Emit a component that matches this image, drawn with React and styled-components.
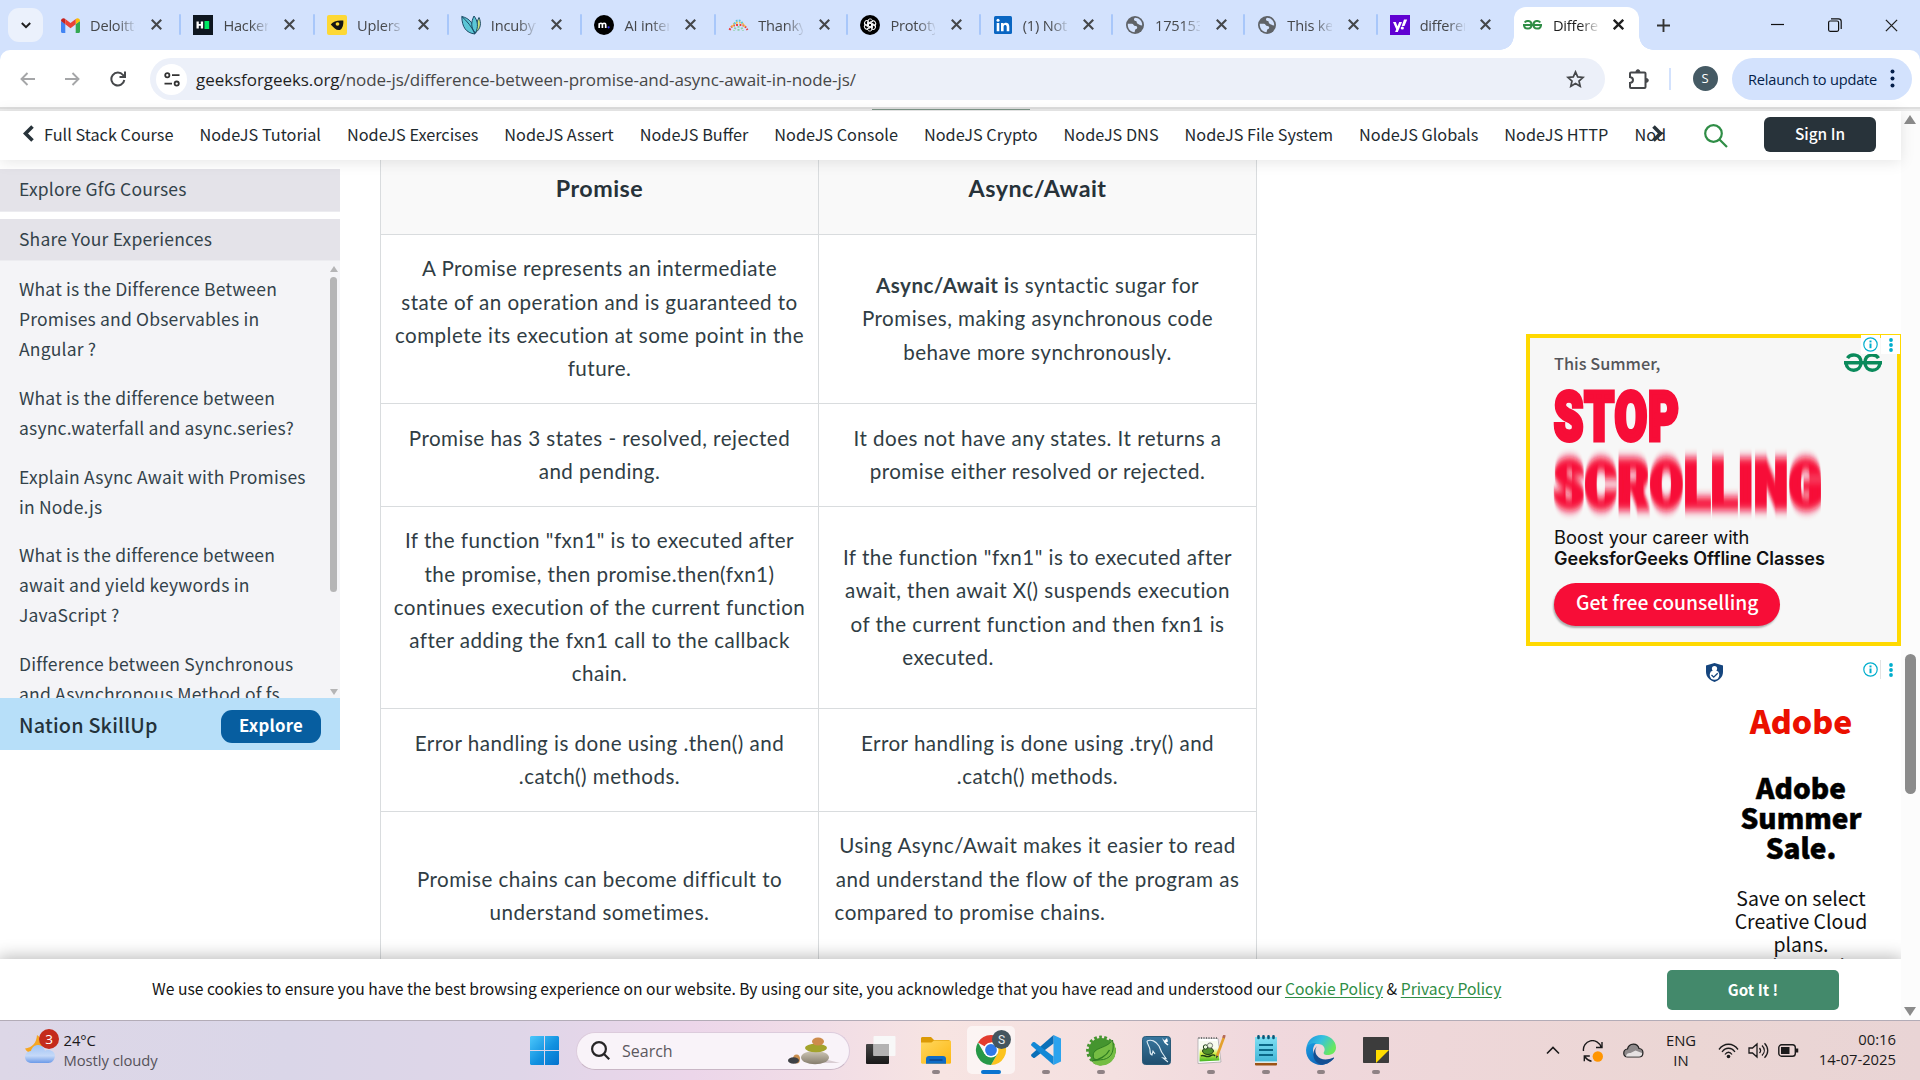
import React from "react";
import styled, { createGlobalStyle } from "styled-components";

const UI = '"Open Sans", "Noto Sans", sans-serif';
const SITE = '"Noto Sans CJK SC", "Noto Sans", sans-serif';
const ARTICLE = 'Lato, "Noto Sans", sans-serif';

const Global = createGlobalStyle`
  *, *::before, *::after { box-sizing: border-box; }
  body { margin: 0; background: #fff; overflow: hidden; }
  svg { display: block; flex: none; }
`;

const Screen = styled.div`
  width: 1920px;
  height: 1080px;
  display: flex;
  flex-direction: column;
  overflow: hidden;
  font-family: ${UI};
  color: #1f1f1f;
`;

/* ---------- browser tabs ---------- */

const TabStrip = styled.div`
  height: 50px;
  flex: none;
  display: flex;
  background: #d3e2fd;
`;

const TabSearch = styled.div`
  width: 35px;
  height: 34px;
  margin: 8px 4px 0 8px;
  border-radius: 11px;
  background: #ebf1fc;
  display: grid;
  place-items: center;
`;

const Tab = styled.div`
  width: ${(p) => p.$width || 133}px;
  height: 50px;
  flex: none;
  display: flex;
  align-items: center;
  padding-left: 13px;
  position: relative;
  color: #45474a;
  &::after {
    content: "";
    position: absolute;
    right: -1px;
    top: 14px;
    width: 2px;
    height: 21px;
    border-radius: 1px;
    background: ${(p) => (p.$line ? "#a8c7fa" : "transparent")};
  }
`;

const ActiveTab = styled(Tab)`
  color: #1f1f1f;
  &::before {
    content: "";
    position: absolute;
    z-index: 0;
    left: 4px;
    right: 4px;
    top: 7px;
    bottom: 0;
    border-radius: 12px 12px 0 0;
    background: #fff;
  }
  & > * { position: relative; z-index: 1; }
`;

const TabFoot = styled.i`
  && {
    position: absolute;
    bottom: 0;
    width: 14px;
    height: 14px;
    ${(p) => (p.$side === "left" ? "left: -10px;" : "right: -10px;")}
    background: radial-gradient(circle at ${(p) => (p.$side === "left" ? "0 0" : "100% 0")}, transparent 13.5px, #fff 14px);
  }
`;

const Favicon = styled.span`
  width: 20px;
  height: 20px;
  display: grid;
  place-items: center;
  flex: none;
`;

const TabTitle = styled.span`
  width: 45px;
  margin-left: 10px;
  padding-bottom: 1px;
  font-size: 14.6px;
  line-height: 22px;
  letter-spacing: -0.2px;
  overflow: hidden;
  white-space: nowrap;
  mask-image: linear-gradient(90deg, #000 60%, transparent 105%);
`;

const TabClose = styled.span`
  width: 12px;
  height: 12px;
  margin-left: 15.5px;
`;

const NewTab = styled.div`
  width: 42px;
  height: 50px;
  display: grid;
  place-items: center;
`;

const WindowControls = styled.div`
  margin-left: auto;
  display: flex;
  align-items: center;
  height: 50px;
`;

const WindowButton = styled.div`
  width: 57px;
  height: 50px;
  display: grid;
  place-items: center;
`;

/* ---------- toolbar ---------- */

const ToolbarBack = styled.div`
  background: #d3e2fd;
  flex: none;
`;

const Toolbar = styled.div`
  height: 57px;
  background: #fff;
  border-radius: 10px 10px 0 0;
  display: flex;
  align-items: center;
  padding: 0 8px 0 5px;
`;

const NavButton = styled.div`
  width: 45px;
  display: grid;
  place-items: center;
`;

const Omnibox = styled.div`
  width: 1455px;
  height: 42px;
  margin: 1px 0 0 10px;
  padding: 0 20px 0 6px;
  border-radius: 21px;
  background: #ecf0f9;
  display: flex;
  align-items: center;
`;

const SiteInfo = styled.div`
  width: 31px;
  height: 31px;
  border-radius: 50%;
  background: #fff;
  display: grid;
  place-items: center;
`;

const Url = styled.div`
  flex: 1;
  margin-left: 9px;
  padding-top: 1px;
  font-size: 17px;
  line-height: 24px;
  letter-spacing: -0.06px;
  color: #474747;
  white-space: nowrap;
  b { font-weight: 400; color: #1f1f1f; }
`;

const Extensions = styled.div`
  width: 66px;
  padding-left: 23px;
  border-right: 2px solid #d3e2fd;
`;

const Avatar = styled.div`
  width: 25px;
  height: 25px;
  margin-left: 21.5px;
  border-radius: 50%;
  background: #455a64;
  color: #fff;
  font-size: 13px;
  line-height: 25px;
  text-align: center;
`;

const Relaunch = styled.div`
  width: 180px;
  height: 42px;
  margin-left: auto;
  padding: 0 17px 0 16px;
  border-radius: 21px;
  background: #d3e2fd;
  color: #041e49;
  font-size: 14.6px;
  letter-spacing: -0.2px;
  white-space: nowrap;
  display: flex;
  align-items: center;
  justify-content: space-between;
`;

const ToolbarEdge = styled.div`
  height: 4px;
  flex: none;
  background: linear-gradient(#dedede 0 2px, #ebebeb 2px 4px);
  padding: 2px 0 0 872px;
  &::before {
    content: "";
    display: block;
    width: 158px;
    height: 1px;
    background: #7f978a;
  }
`;

/* ---------- page ---------- */

const Page = styled.div`
  height: 909px;
  flex: none;
  display: flex;
  background: #fff;
`;

const PageMain = styled.div`
  width: 1901px;
  display: flex;
  flex-direction: column;
  font-family: ${SITE};
`;

const PageScroll = styled.div`
  width: 19px;
  background: #fcfcfc;
  display: flex;
  flex-direction: column;
  align-items: center;
  padding: 4px 1px 4px 0;
`;

const ScrollArrow = styled.i`
  width: 0;
  height: 0;
  border: ${(p) => p.$size}px solid transparent;
  border-top-width: ${(p) => (p.$down ? p.$size * 1.5 : 0)}px;
  border-bottom-width: ${(p) => (p.$down ? 0 : p.$size * 1.5)}px;
  border-${(p) => (p.$down ? "top" : "bottom")}-color: ${(p) => p.$color};
`;

const PageThumb = styled.div`
  width: 11px;
  height: 140px;
  margin: 530px 0 auto;
  border-radius: 6px;
  background: #8b8b8b;
`;

const SiteNav = styled.nav`
  height: 49px;
  flex: none;
  display: flex;
  align-items: center;
  background: #fff;
  box-shadow: 0 2px 14px rgba(0, 0, 0, 0.1);
  z-index: 2;
  padding-left: 23px;
`;

const NavLinks = styled.div`
  width: 1633px;
  margin-left: 10px;
  padding-bottom: 4px;
  display: flex;
  gap: 26px;
  overflow: hidden;
  white-space: nowrap;
  font-size: 16.27px;
  line-height: 30px;
  color: #1e2a2f;
`;

const NavClip = styled.span`
  width: 32px;
  overflow: hidden;
`;

const NavArrow = styled.div`
  width: 11px;
  margin-left: ${(p) => (p.$over ? "-25px" : "0")};
  padding-bottom: 4px;
  z-index: 1;
`;

const SearchIcon = styled.div`
  margin-left: 41px;
`;

const SignIn = styled.div`
  width: 112px;
  height: 35px;
  margin: 0 0 2px 36px;
  border-radius: 6px;
  background: #28333a;
  color: #fff;
  font-size: 15.4px;
  font-weight: 500;
  line-height: 33px;
  text-align: center;
`;

const Content = styled.div`
  height: 799px;
  flex: none;
  display: flex;
  align-items: flex-start;
  overflow: hidden;
`;

/* ---------- sidebar ---------- */

const Sidebar = styled.aside`
  width: 340px;
  margin-top: 9px;
  color: #33424a;
  font-size: 17.5px;
  letter-spacing: 0.19px;
`;

const SideHeading = styled.div`
  height: ${(p) => p.$height}px;
  margin-bottom: ${(p) => p.$gap}px;
  padding-left: 19px;
  line-height: 40px;
  background: #e4e3e9;
  border-bottom: 1px solid #ececf0;
`;

const SideList = styled.div`
  height: 437px;
  display: flex;
  justify-content: space-between;
  background: #f4f4f7;
  overflow: hidden;
`;

const SideLinks = styled.div`
  padding: 13px 0 0 19px;
  white-space: nowrap;
`;

const SideLink = styled.div`
  line-height: 30px;
  margin-bottom: 18.8px;
`;

const SideScroll = styled.div`
  width: 13px;
  display: flex;
  flex-direction: column;
  align-items: center;
  padding: 5px 0 3px;
`;

const SideThumb = styled.div`
  width: 7px;
  height: 315px;
  margin: 5px 0 auto;
  border-radius: 4px;
  background: #b5b5b6;
`;

const SkillUp = styled.div`
  height: 52px;
  padding: 0 19px;
  display: flex;
  align-items: center;
  justify-content: space-between;
  background: #b7dff9;
  color: #24323a;
  font-size: 19.8px;
  font-weight: 500;
`;

const ExploreButton = styled.div`
  width: 100px;
  height: 33px;
  margin-top: 5px;
  border-radius: 11px;
  background: #075ea0;
  color: #fff;
  font-size: 16.8px;
  font-weight: 700;
  line-height: 31px;
  text-align: center;
`;

/* ---------- comparison table ---------- */

const Compare = styled.div`
  width: 877px;
  margin-left: 40px;
  display: grid;
  grid-template-columns: 438px 438px;
  grid-template-rows: 75px 169px 103px 202px 103px 169px;
  border-right: 1px solid #d9dcde;
  font-family: ${ARTICLE};
  font-size: 20.6px;
  letter-spacing: 0.47px;
  color: #303d44;
`;

const HeadCell = styled.div`
  padding-top: 12px;
  border-left: 1px solid #d9dcde;
  border-bottom: 1px solid #d9dcde;
  background: #f9f9f9;
  color: #273239;
  font-size: 23.3px;
  font-weight: 700;
  line-height: 33px;
  text-align: center;
`;

const Cell = styled.div`
  border-left: 1px solid #d9dcde;
  border-bottom: 1px solid #d9dcde;
  display: flex;
  flex-direction: column;
  align-items: center;
  justify-content: center;
  white-space: nowrap;
`;

const Line = styled.div`
  height: 33.3px;
  line-height: 32.6px;
  padding-right: ${(p) => p.$tail || 0}px;
  b { font-weight: 700; }
`;

/* ---------- ads ---------- */

const AdColumn = styled.div`
  width: 375px;
  margin: 174px 0 0 auto;
  display: flex;
  flex-direction: column;
  align-items: flex-end;
`;

const SummerAd = styled.div`
  width: 375px;
  height: 312px;
  border: 4px solid #ffd900;
  background: #f7f7f7;
  padding: 13px 0 0 24px;
  position: relative;
  white-space: nowrap;
`;

const AdKicker = styled.div`
  height: 24px;
  margin-bottom: 8px;
  color: #55565a;
  font-size: 16.3px;
  font-weight: 500;
  line-height: 24px;
`;

const Shout = styled.div`
  height: 68px;
  font-family: Roboto, sans-serif;
  font-weight: 900;
  font-size: 67.5px;
  line-height: 68px;
  letter-spacing: 2px;
  color: #f70d37;
  -webkit-text-stroke: 5px #f70d37;
  transform: scaleX(${(p) => p.$squeeze});
  transform-origin: 0 50%;
  filter: ${(p) => (p.$moving ? "url(#motion)" : "none")};
`;

const Pitch = styled.div`
  font-family: Inter, sans-serif;
  font-size: ${(p) => (p.$strong ? 18.05 : 18.3)}px;
  font-weight: ${(p) => (p.$strong ? 600 : 400)};
  line-height: 21px;
  color: #111;
`;

const PitchBlock = styled.div`
  margin: 8px 0 14px;
`;

const Counsel = styled.div`
  width: 226px;
  height: 43px;
  padding-left: 22px;
  border-radius: 22px;
  background: #f70d37;
  box-shadow: -1px 2px 2px rgba(0, 0, 0, 0.3);
  color: #fff;
  font-size: 19.3px;
  font-weight: 500;
  line-height: 38px;
`;

const AdLogo = styled.div`
  position: absolute;
  right: 15px;
  top: 15px;
`;

const AdChoices = styled.div`
  position: absolute;
  right: ${(p) => p.$inset}px;
  top: ${(p) => p.$top}px;
  display: flex;
  gap: 1px;
  background: ${(p) => (p.$ruled ? "#e3e3e3" : "transparent")};
  span {
    width: 19px;
    height: 19px;
    background: #fff;
    display: grid;
    place-items: center;
  }
`;

const AdobeAd = styled.div`
  width: 200px;
  height: 330px;
  position: relative;
  padding-top: 54.5px;
  display: flex;
  flex-direction: column;
  align-items: center;
  white-space: nowrap;
`;

const Shield = styled.div`
  position: absolute;
  left: 5px;
  top: 17px;
`;

const AdobeLogo = styled.div`
  height: 38px;
  font-size: 32px;
  font-weight: 900;
  line-height: 38px;
  color: #eb1000;
`;

const AdobeHead = styled.div`
  margin-top: 33px;
  font-size: 28px;
  font-weight: 900;
  line-height: 30.3px;
  text-align: center;
  color: #000;
  -webkit-text-stroke: 0.5px #000;
`;

const AdobeCopy = styled.div`
  margin-top: 25px;
  font-size: 19.5px;
  line-height: 22.6px;
  text-align: center;
  color: #111;
`;

/* ---------- cookie bar ---------- */

const CookieBar = styled.div`
  height: 61px;
  flex: none;
  padding: 0 62px 0 152px;
  display: flex;
  align-items: center;
  justify-content: space-between;
  background: #fff;
  box-shadow: 0 0 16px 2px rgba(0, 0, 0, 0.28);
  z-index: 2;
  font-size: 15.67px;
  line-height: 24px;
  white-space: nowrap;
  color: #151515;
  clip-path: inset(-24px 0 0 0);
  a { color: #2f8d46; text-decoration: underline; text-underline-offset: 2px; }
`;

const CookieText = styled.div`
  padding-bottom: 1.5px;
`;

const GotIt = styled.div`
  width: 172px;
  height: 40px;
  border-radius: 5px;
  background: #43896b;
  color: #fff;
  font-size: 15.2px;
  font-weight: 700;
  line-height: 38px;
  text-align: center;
`;

/* ---------- taskbar ---------- */

const Taskbar = styled.div`
  height: 60px;
  flex: none;
  border-top: 1px solid #b3acb7;
  background: linear-gradient(90deg, #ddd7e7 0%, #dad6e8 15%, #dfd6e8 27%, #ecd6ea 36%, #f1dde6 43%, #f7e4e2 49%, #f4e0e0 58%, #f0d8dd 66%, #eed7d9 75%, #ebd6d4 88%, #e9d4d5 100%);
  display: flex;
  align-items: center;
  color: #1b1a1b;
`;

const Weather = styled.div`
  width: 506px;
  height: 59px;
  padding: 8px 0 0 24px;
  display: flex;
  align-items: flex-start;
`;

const WeatherText = styled.div`
  margin: 1px 0 0 4.5px;
  font-size: 14.8px;
  line-height: 20px;
  letter-spacing: -0.05px;
  div + div { color: #55525a; }
`;

const StartMenu = styled.div`
  width: 70px;
  padding-left: 24px;
`;

const TaskSearch = styled.div`
  width: 274px;
  height: 38px;
  padding: 0 9px 0 14px;
  border-radius: 19px;
  background: #f9f3f9;
  border: 1px solid #dccbdc;
  border-bottom-color: #c9b6c6;
  display: flex;
  align-items: center;
  color: #5c585e;
  font-size: 16px;
  span { flex: 1; margin-left: 12px; }
`;

const Apps = styled.div`
  display: flex;
  margin-left: 3.5px;
  height: 59px;
`;

const AppSlot = styled.div`
  width: 55px;
  height: 59px;
  display: flex;
  flex-direction: column;
  align-items: center;
  padding-top: 5px;
`;

const AppTile = styled.div`
  width: 48px;
  height: 48px;
  border-radius: 5px;
  background: ${(p) => (p.$active ? "rgba(255,255,255,.6)" : "transparent")};
  display: grid;
  place-items: center;
`;

const AppMark = styled.div`
  width: ${(p) => (p.$mark === "active" ? 20 : 8)}px;
  height: 4px;
  margin-top: -4px;
  border-radius: 2px;
  background: ${(p) => ({ active: "#0a74d0", open: "#8f8285", none: "transparent" }[p.$mark])};
`;

const Tray = styled.div`
  margin-left: auto;
  display: flex;
  align-items: center;
  padding-right: 24px;
  font-size: 14.8px;
  line-height: 20px;
`;

const TrayItem = styled.div`
  width: ${(p) => p.$width}px;
  padding-bottom: ${(p) => p.$lift || 0}px;
  display: grid;
  place-items: center;
  text-align: center;
`;

const Clock = styled.div`
  width: 89px;
  padding-bottom: 3px;
  display: flex;
  flex-direction: column;
  align-items: flex-end;
  white-space: nowrap;
`;

/* ---------- drawings ---------- */

const Cross = ({ size = 10, width = 1.9 }) => (
  <svg width={size} height={size} viewBox="0 0 10 10" fill="none" stroke="currentColor" strokeWidth={width}>
    <path d="M.7.7l8.600 8.600M9.300.7L.7 9.300" />
  </svg>
);

const GfgMark = ({ width, color, stroke = 3 }) => (
  <svg width={width} height={width / 2} viewBox="0 0 38 19" fill="none" stroke={color} strokeWidth={stroke}>
    <path d="M3.500 5.200C6.200.6 17 .1 17 9.500M17 9.500c0 10-14 10.400-15 .6M0 9.800h38M34.500 5.200C31.800.6 21 .1 21 9.500M21 9.500c0 10 14 10.400 15 .6" />
  </svg>
);

const Globe = () => (
  <svg width="18" height="18" viewBox="0 0 20 20">
    <circle cx="10" cy="10" r="10" fill="#5f6368" />
    <path d="M2 8.500h4.500c2 0 2 2.500 4 2.500 2.500 0 2.500 3 .5 3.500-1 .3-1 2-1.500 3.500C5 18 1.500 13.500 2 8.500zM10 2c-2 1.500-1 3.500.5 3.500 2 0 1 2.500 2.500 3s2 2 5 2C18.300 5.500 14.500 2 10 2z" fill="#d3e2fd" />
  </svg>
);

const favicons = {
  gmail: (
    <svg width="19" height="15" viewBox="0 0 19 15">
      <path d="M0 3v10.500C0 14.400.6 15 1.400 15H4.300V6z" fill="#4285f4" />
      <path d="M19 3v10.500c0 .9-.6 1.500-1.400 1.500h-2.900V6z" fill="#34a853" />
      <path d="M0 3C0 .3 2.600-.6 4.300.9V6.200L0 3z" fill="#c5221f" />
      <path d="M19 3c0-2.700-2.600-3.600-4.300-2.100v5.300L19 3z" fill="#fbbc04" />
      <path d="M4.300.9l5.200 4 5.200-4v5.300l-5.200 4-5.200-4z" fill="#ea4335" />
    </svg>
  ),
  hacker: (
    <svg width="20" height="20" viewBox="0 0 20 20">
      <path d="M0 0h20v20H0z" fill="#0e1620" />
      <path d="M3.500 6.500h2.300v2.600h2V6.500h2.300v7H7.800v-2.700h-2v2.700H3.500z" fill="#fff" />
      <path d="M11.500 6h4.700v8h-4.700z" fill="#00ea64" />
    </svg>
  ),
  uplers: (
    <svg width="20" height="20" viewBox="0 0 20 20">
      <rect width="20" height="20" rx="2" fill="#fdd835" />
      <path d="M3.800 9.500C6 6 11 5 16.300 5.500c.4 4-.8 8.500-3.500 9.500-3.500.7-5.500-2-9-5.500z" fill="#151515" />
      <ellipse cx="10.500" cy="9" rx="1.900" ry="1.700" fill="#fdd835" />
    </svg>
  ),
  incuby: (
    <svg width="20" height="20" viewBox="0 0 20 20" stroke="#1b4b66" strokeWidth="1">
      <path d="M14 18c1-6 1.500-11 4-15.500C20.500 8 20 14 14 18z" fill="#c8df7c" />
      <path d="M14 19C5 18 1 12 .8 1.500 8 3 14 9 14 19z" fill="#5bc6d6" />
      <path d="M14.500 18C9.500 13 10 7 13 1c4 5 4.500 11 1.500 17z" fill="#5bc6d6" />
      <path d="M14 19C11 12 6 6 .8 1.500" fill="none" />
    </svg>
  ),
  m: (
    <svg width="20" height="20" viewBox="0 0 20 20">
      <circle cx="10" cy="10" r="10" fill="#000" />
      <path d="M5.200 13V8.200M5.200 9.500c.4-1.700 3.200-1.700 3.200.2V13M8.400 9.500c.4-1.700 3.300-1.700 3.300.2V13" stroke="#fff" strokeWidth="1.700" fill="none" />
      <circle cx="14.600" cy="12.300" r="1.100" fill="#3b35ff" />
    </svg>
  ),
  thank: (
    <svg width="21" height="12" viewBox="0 0 21 12" fill="none" strokeWidth="2" strokeDasharray="1.700 1.300">
      <path d="M1.500 11C4 6 6 6 10.500 6s6.500 0 9 5" stroke="#ec3b3b" />
      <path d="M4 8C6 3.500 8 3.500 10.500 3.500S15 3.500 17 8" stroke="#f5c242" />
      <path d="M6.500 5c1-3 2.500-3.500 4-3.500s3 .5 4 3.500" stroke="#55c4dd" />
      <path d="M10.500 7v5M7.500 8.500L6 12M13.500 8.500L15 12" stroke="#8ed0a8" />
    </svg>
  ),
  gpt: (
    <svg width="20" height="20" viewBox="0 0 20 20" fill="none" stroke="#fff" strokeWidth="1">
      <circle cx="10" cy="10" r="10" fill="#000" stroke="none" />
      {[0, 60, 120, 180, 240, 300].map((a) => (
        <path key={a} transform={`rotate(${a} 10 10)`} d="M10 11.800L7.600 10.400V6.500c0-3 4.200-3.400 5-.8M10 8.100l3.300-1.900" />
      ))}
    </svg>
  ),
  linkedin: (
    <svg width="18" height="18" viewBox="0 0 18 18">
      <rect width="18" height="18" rx="1.500" fill="#0a66c2" />
      <path d="M2.700 6.900h2.600v8.400H2.700zM7 6.900h2.500v1.200c1.200-2.100 5.800-2 5.800 2.300v4.900h-2.600v-4.400c0-2.500-3.100-2.300-3.100 0v4.400H7z" fill="#fff" />
      <circle cx="4" cy="4.200" r="1.500" fill="#fff" />
    </svg>
  ),
  globe: <Globe />,
  yahoo: (
    <svg width="20" height="20" viewBox="0 0 20 20">
      <path d="M0 0h20v20H0z" fill="#6001d2" />
      <path d="M3 7h2.800l1.700 4.200L9.200 7H12l-4.200 10H5.100l1.100-2.700zM14 4.500h3.200L14.500 11h-2.800z" fill="#fff" />
      <circle cx="12.300" cy="13" r="1.600" fill="#fff" />
    </svg>
  ),
  gfg: <GfgMark width={19} color="#2f8d46" stroke={4} />,
};

const tabs = [
  ["gmail", "Deloitte", 133.4],
  ["hacker", "HackerR", 133.7],
  ["uplers", "Uplers |", 133.7],
  ["incuby", "Incubyte", 133.7],
  ["m", "AI interv", 133.7],
  ["thank", "Thanky", 132.3],
  ["gpt", "Prototy", 132.3],
  ["linkedin", "(1) Noti", 132.3],
  ["globe", "175153", 132.3],
  ["globe", "This key", 132.3],
  ["yahoo", "differen", 133.3],
];

const InfoIcon = () => (
  <svg width="15" height="15" viewBox="0 0 15 15" fill="none" stroke="#00aecd">
    <circle cx="7.500" cy="7.500" r="6.700" strokeWidth="1.200" />
    <path d="M7.500 6.500v4.700" strokeWidth="2" />
    <path d="M7.500 3.500v1.900" strokeWidth="2" />
  </svg>
);

const Dots = ({ color, r = 1.9, gap = 5 }) => (
  <svg width="4" height="16" viewBox="0 0 4 16" fill={color}>
    <circle cx="2" cy={8 - gap} r={r} />
    <circle cx="2" cy="8" r={r} />
    <circle cx="2" cy={8 + gap} r={r} />
  </svg>
);

const AppIcons = {
  taskview: (
    <svg width="30" height="28" viewBox="0 0 30 28">
      <defs>
        <linearGradient id="tv" x1="0" y1="0" x2="0" y2="1">
          <stop offset="0" stopColor="#454545" />
          <stop offset="1" stopColor="#191919" />
        </linearGradient>
      </defs>
      <rect x="0" y="8" width="23" height="20" rx="1" fill="url(#tv)" />
      <rect x="7.500" y="0" width="22" height="20" rx="1" fill="#f8f8f8" />
      <path d="M7.500 8H23v12H7.500z" fill="#b3b2b2" />
    </svg>
  ),
  folder: (
    <svg width="30" height="27" viewBox="0 0 30 27">
      <defs>
        <linearGradient id="fo" x1="0" y1="0" x2="1" y2="1">
          <stop offset="0" stopColor="#ffd75e" />
          <stop offset="1" stopColor="#fdb813" />
        </linearGradient>
      </defs>
      <path d="M0 1.500C0 .6.600 0 1.500 0H10l3 3h15.500v5H0z" fill="#dc9a06" />
      <path d="M0 5.500h10.500l2.500-2h15.500c1 0 1.500.5 1.500 1.500v20.500c0 .8-.5 1.200-1.200 1.200H1.200c-.8 0-1.200-.4-1.200-1.200z" fill="url(#fo)" />
      <path d="M5 26.700V22c0-2 1-3 3-3h14c2 0 3 1 3 3v4.700z" fill="#0f6cc6" />
      <path d="M8.500 23h13" stroke="#0b3f82" strokeWidth="1.300" />
    </svg>
  ),
  chrome: (
    <svg width="40" height="40" viewBox="-2 -2 40 40">
      <path d="M18 18L5 10.500A15 15 0 0 1 31 10.500H18z" fill="#e33b2e" />
      <path d="M31 10.500H18v7.500l6.500 3.700L18 33a15 15 0 0 0 13-22.500z" fill="#fcc31e" />
      <path d="M5 10.500A15 15 0 0 0 18 33l6.500-11.300H18L11.500 21.700z" fill="#279847" />
      <circle cx="18" cy="18" r="7.500" fill="#fff" />
      <circle cx="18" cy="18" r="5.900" fill="#2f79e8" />
      <circle cx="28.500" cy="7.500" r="9.500" fill="#44555e" />
      <text x="28.500" y="12" fontSize="12" fill="#e7ecee" textAnchor="middle" fontFamily="Roboto">S</text>
    </svg>
  ),
  vscode: (
    <svg width="30" height="30" viewBox="0 0 30 30">
      <path d="M22.500 0L30 3.500v23L22.500 30z" fill="#2ba3ee" />
      <path d="M22.500 0v8.500L3.800 22.800c-.6.400-1.200.3-1.700-.1L.500 21.200c-.6-.6-.6-1.400 0-2z" fill="#0a6fb8" />
      <path d="M22.500 30v-8.500L3.800 7.200c-.6-.4-1.200-.3-1.700.1L.500 8.800c-.6.6-.6 1.400 0 2z" fill="#1288d6" />
    </svg>
  ),
  spring: (
    <svg width="31" height="31" viewBox="0 0 31 31">
      <circle cx="15" cy="15.500" r="12.500" fill="#45952f" />
      <circle cx="15" cy="15.500" r="13.200" fill="none" stroke="#45952f" strokeWidth="3.400" strokeDasharray="2.700 2.300" />
      <path d="M28 8.500C32.500 18 28 29.500 16 30.500c-5 .3-9-2-10.500-4.500C14 28 25 21 28 8.500z" fill="#75bd43" />
      <path d="M26.500 5c2 10 0 17.500-9 19.500-4 .8-7.500 0-9.500-.5C3.500 11.500 20 15 26.500 5z" fill="#75bd43" stroke="#2f7d22" strokeWidth="1" />
      <path d="M6 26c7-1 14.500-5 17.500-11" stroke="#2f7d22" strokeWidth="1.300" fill="none" />
    </svg>
  ),
  mysql: (
    <svg width="29" height="29" viewBox="0 0 29 29">
      <defs>
        <linearGradient id="my" x1="0" y1="0" x2="0" y2="1">
          <stop offset="0" stopColor="#38779f" />
          <stop offset="1" stopColor="#204e6e" />
        </linearGradient>
      </defs>
      <rect x=".5" y=".5" width="28" height="28" rx="3" fill="url(#my)" stroke="#295a78" />
      <path d="M5 5c4-2 9 0 12 5 1.500 5 3 7.500 7 12.500l-3-.5 5 4M5 5c0 3 3 6 3 9s0 4 2 5l1-4 2 3" fill="none" stroke="#dcebf3" strokeWidth="1.100" />
      <path d="M20 2l2.500 2.500L25 2l1 3.500-2 1L26.500 8.500 25.500 9.500l-3-2.500z" fill="#fff" />
    </svg>
  ),
  npp: (
    <svg width="30" height="30" viewBox="0 0 30 30">
      <defs>
        <linearGradient id="np" x1="0" y1="0" x2="0" y2="1">
          <stop offset=".35" stopColor="#f8fbf0" />
          <stop offset=".6" stopColor="#d5f04a" />
          <stop offset="1" stopColor="#42b524" />
        </linearGradient>
      </defs>
      <path d="M2 3l20 .5L25 27 2 28.500z" fill="#fff" stroke="#a9a9a9" strokeWidth=".8" />
      <path d="M3.500 6h18l2 19.500-20 1z" fill="url(#np)" />
      <path d="M2.500 3h20" stroke="#555" strokeDasharray="1 1.500" strokeWidth="1.500" />
      <ellipse cx="12" cy="16" rx="5.500" ry="3.500" fill="#4f8f2a" stroke="#1e3c14" />
      <circle cx="9.500" cy="12" r="2.200" fill="#e8f7d8" stroke="#1e3c14" />
      <circle cx="14" cy="10.500" r="2.600" fill="#e8f7d8" stroke="#777" />
      <path d="M5 21c3-2 5 2 9 0s4-1 5 0" stroke="#1e3c14" strokeWidth="1.500" fill="none" />
      <path d="M21 21L28 2" stroke="#e3a12d" strokeWidth="2.600" />
      <path d="M27.500 3L28.500 0" stroke="#b56b5a" strokeWidth="2.600" />
      <path d="M20 23.500l.3-3 2 .8z" fill="#333" />
    </svg>
  ),
  notepad: (
    <svg width="22" height="31" viewBox="0 0 22 31">
      <defs>
        <linearGradient id="no" x1="0" y1="0" x2="0" y2="1">
          <stop offset="0" stopColor="#7fdff3" />
          <stop offset="1" stopColor="#41b5d6" />
        </linearGradient>
      </defs>
      <rect y="25" width="22" height="5.500" rx="1" fill="#9b5215" />
      <path d="M0 2h22v25.500H0z" fill="url(#no)" />
      <path d="M0 26.500h22v1.300H0z" fill="#fff" />
      <path d="M4 10h14M4 15h14M4 20h14" stroke="#0a6787" strokeWidth="2" />
      <path d="M3.500 1.300v1.700M8.500 1.300v1.700M13.500 1.300v1.700M18.500 1.300v1.700" stroke="#0a5878" strokeWidth="2.600" strokeLinecap="round" />
    </svg>
  ),
  edge: (
    <svg width="30" height="30" viewBox="0 0 30 30">
      <defs>
        <linearGradient id="e1" x1="0" y1="0" x2="1" y2=".5">
          <stop offset="0" stopColor="#1e8fdc" />
          <stop offset=".5" stopColor="#35c1e0" />
          <stop offset="1" stopColor="#6ae85d" />
        </linearGradient>
        <linearGradient id="e2" x1="0" y1="0" x2="1" y2="1">
          <stop offset="0" stopColor="#1b9de2" />
          <stop offset="1" stopColor="#0d4fa8" />
        </linearGradient>
      </defs>
      <path d="M.3 13C1.500 5 7.500 0 15 0c9 0 15 6 15 12.500 0 5-4 7.500-8.500 7.500-3.500 0-4.500-1.500-3.500-3 2-3.500-.5-8-6-8C6 9 2 11 .3 13z" fill="url(#e1)" />
      <path d="M.1 14.500C.5 10 5 7.800 10 8.500c-3.500 3-4 8-1 12.500 3.500 5 11 6 18.500 2C24 28 19 30 15 30 6.500 30-.5 23.500.1 14.500z" fill="url(#e2)" />
      <path d="M12 10.500c-3 2-3.500 6.500-1 10 3 4.500 10 5 16 2.200.9-.5 1.300.2.900.8-3.900 4.700-9.400 6.200-13.400 6-7-2.500-8.500-10-6-15 1-2 2-3 3.500-4z" fill="#144f93" />
    </svg>
  ),
  sticky: (
    <svg width="26" height="26" viewBox="0 0 26 26">
      <path d="M1 0h24c.6 0 1 .4 1 1v24c0 .6-.4 1-1 1H1c-.6 0-1-.4-1-1V1c0-.6.4-1 1-1z" fill="#3c3c3c" />
      <path d="M13 13h13L13 26z" fill="#ffdc00" />
    </svg>
  ),
};

const apps = [
  ["taskview", "none"],
  ["folder", "open"],
  ["chrome", "active"],
  ["vscode", "open"],
  ["spring", "open"],
  ["mysql", "none"],
  ["npp", "open"],
  ["notepad", "open"],
  ["edge", "open"],
  ["sticky", "open"],
];

const navLinks = [
  "Full Stack Course",
  "NodeJS Tutorial",
  "NodeJS Exercises",
  "NodeJS Assert",
  "NodeJS Buffer",
  "NodeJS Console",
  "NodeJS Crypto",
  "NodeJS DNS",
  "NodeJS File System",
  "NodeJS Globals",
  "NodeJS HTTP",
];

const sideLinks = [
  ["What is the Difference Between", "Promises and Observables in", "Angular ?"],
  ["What is the difference between", "async.waterfall and async.series?"],
  ["Explain Async Await with Promises", "in Node.js"],
  ["What is the difference between", "await and yield keywords in", "JavaScript ?"],
  ["Difference between Synchronous", "and Asynchronous Method of fs"],
];

const rows = [
  [
    ["A Promise represents an intermediate", "state of an operation and is guaranteed to", "complete its execution at some point in the", "future."],
    [<><b>Async/Await i</b>s syntactic sugar for</>, "Promises, making asynchronous code", "behave more synchronously."],
  ],
  [
    ["Promise has 3 states - resolved, rejected", "and pending."],
    ["It does not have any states. It returns a", "promise either resolved or rejected."],
  ],
  [
    ["If the function \"fxn1\" is to executed after", "the promise, then promise.then(fxn1)", "continues execution of the current function", "after adding the fxn1 call to the callback", "chain."],
    ["If the function \"fxn1\" is to executed after", "await, then await X() suspends execution", "of the current function and then fxn1 is", { text: "executed.", tail: 179 }],
  ],
  [
    ["Error handling is done using .then() and", ".catch() methods."],
    ["Error handling is done using .try() and", ".catch() methods."],
  ],
  [
    ["Promise chains can become difficult to", "understand sometimes."],
    ["Using Async/Await makes it easier to read", "and understand the flow of the program as", { text: "compared to promise chains.", tail: 135 }, ""],
  ],
];

const Lines = ({ items }) => (
  <Cell>
    {items.map((l, i) => (l && l.text ? <Line key={i} $tail={l.tail}>{l.text}</Line> : <Line key={i}>{l}</Line>))}
  </Cell>
);

export default function App() {
  return (
    <Screen>
      <Global />
      <TabStrip>
        <TabSearch>
          <svg width="10" height="7" viewBox="0 0 10 7" fill="none" stroke="#1f1f1f" strokeWidth="2">
            <path d="M.8 1L5 5.200 9.200 1" />
          </svg>
        </TabSearch>
        {tabs.map(([icon, title, width], i) => (
          <Tab key={i} $width={width} $line={i < tabs.length - 1}>
            <Favicon>{favicons[icon]}</Favicon>
            <TabTitle>{title}</TabTitle>
            <TabClose><Cross size={11} /></TabClose>
          </Tab>
        ))}
        <ActiveTab>
          <TabFoot $side="left" />
          <TabFoot $side="right" />
          <Favicon>{favicons.gfg}</Favicon>
          <TabTitle>Differen</TabTitle>
          <TabClose><Cross size={11} width={2.1} /></TabClose>
        </ActiveTab>
        <NewTab>
          <svg width="13" height="13" viewBox="0 0 13 13" stroke="#333" strokeWidth="1.900"><path d="M6.500 0v13M0 6.500h13" /></svg>
        </NewTab>
        <WindowControls>
          <WindowButton>
            <svg width="13" height="13" viewBox="0 0 13 13" stroke="#111" strokeWidth="1.200"><path d="M0 5.500h13" /></svg>
          </WindowButton>
          <WindowButton>
            <svg width="14" height="14" viewBox="0 0 14 14" fill="none" stroke="#111" strokeWidth="1.200">
              <rect x=".6" y="3" width="10" height="10.300" rx="1.500" />
              <path d="M3 .8h7.500c1.600 0 2.700 1 2.700 2.700V11" />
            </svg>
          </WindowButton>
          <WindowButton><Cross size={13} width={1} /></WindowButton>
        </WindowControls>
      </TabStrip>

      <ToolbarBack>
        <Toolbar>
          <NavButton>
            <svg width="15" height="14" viewBox="0 0 15 14" fill="none" stroke="#a5a6a8" strokeWidth="1.900"><path d="M15 7H1.500M7.500 1l-6 6 6 6" /></svg>
          </NavButton>
          <NavButton>
            <svg width="15" height="14" viewBox="0 0 15 14" fill="none" stroke="#a5a6a8" strokeWidth="1.900"><path d="M0 7h13.500M7.500 1l6 6-6 6" /></svg>
          </NavButton>
          <NavButton>
            <svg width="16" height="16" viewBox="0 0 16 16" fill="none" stroke="#45474a" strokeWidth="2">
              <path d="M14.300 9A6.500 6.500 0 1 1 13 4l1.500 1.600" />
              <path d="M15 .5V6H9.500" />
            </svg>
          </NavButton>
          <Omnibox>
            <SiteInfo>
              <svg width="16" height="15" viewBox="0 0 16 15" fill="none" stroke="#333" strokeWidth="1.800">
                <circle cx="3.300" cy="3.200" r="2.100" /><path d="M8 3.200h7.500M.5 11.600H8" /><circle cx="12.700" cy="11.600" r="2.100" />
              </svg>
            </SiteInfo>
            <Url><b>geeksforgeeks.org</b>/node-js/difference-between-promise-and-async-await-in-node-js/</Url>
            <svg width="19" height="18" viewBox="0 0 19 18" fill="none" stroke="#45474a" strokeWidth="1.700">
              <path d="M9.500 1.900l2.200 5 5.400.5-4.100 3.600 1.200 5.300-4.700-2.800-4.700 2.800L6 11 1.900 7.400l5.400-.5z" />
            </svg>
          </Omnibox>
          <Extensions>
            <svg width="22" height="22" viewBox="0 0 22 22" fill="none" stroke="#45474a" strokeWidth="2">
              <path d="M3 4.500h13.500c.6 0 1 .4 1 1V19c0 .6-.4 1-1 1H3c-.6 0-1-.4-1-1v-4c4-.5 4-5.500 0-6V5.500c0-.6.4-1 1-1z" />
              <path d="M8 4.500V3.600a1.900 1.900 0 0 1 3.800 0v.9M17.500 10.500h.9a1.900 1.900 0 0 1 0 3.800h-.9" fill="#45474a" strokeWidth="1" />
            </svg>
          </Extensions>
          <Avatar>S</Avatar>
          <Relaunch>
            Relaunch to update
            <svg width="5" height="19" viewBox="0 0 5 19" fill="#041e49">
              <circle cx="2.500" cy="2.500" r="2" /><circle cx="2.500" cy="9.500" r="2" /><circle cx="2.500" cy="16.500" r="2" />
            </svg>
          </Relaunch>
        </Toolbar>
      </ToolbarBack>
      <ToolbarEdge />

      <Page>
        <PageMain>
          <SiteNav>
            <NavArrow>
              <svg width="11" height="17" viewBox="0 0 11 17" fill="none" stroke="#28333a" strokeWidth="3.600"><path d="M9.500 1.500l-7 7 7 7" /></svg>
            </NavArrow>
            <NavLinks>
              {navLinks.map((l) => <span key={l}>{l}</span>)}
              <NavClip>Nod</NavClip>
            </NavLinks>
            <NavArrow $over>
              <svg width="11" height="17" viewBox="0 0 11 17" fill="none" stroke="#28333a" strokeWidth="3.600"><path d="M1.500 1.500l7 7-7 7" /></svg>
            </NavArrow>
            <SearchIcon>
              <svg width="24" height="24" viewBox="0 0 24 24" fill="none" stroke="#2f8d46" strokeWidth="2.200">
                <circle cx="9.500" cy="9.500" r="8.300" /><path d="M15.500 15.500l7.500 7.500" />
              </svg>
            </SearchIcon>
            <SignIn>Sign In</SignIn>
          </SiteNav>

          <Content>
            <Sidebar>
              <SideHeading $height={43} $gap={7}>Explore GfG Courses</SideHeading>
              <SideHeading $height={42} $gap={0}>Share Your Experiences</SideHeading>
              <SideList>
                <SideLinks>
                  {sideLinks.map((lines, i) => (
                    <SideLink key={i}>{lines.map((l) => <div key={l}>{l}</div>)}</SideLink>
                  ))}
                </SideLinks>
                <SideScroll>
                  <ScrollArrow $size={4.500} $color="#b5b5b6" />
                  <SideThumb />
                  <ScrollArrow $size={4.500} $color="#b5b5b6" $down />
                </SideScroll>
              </SideList>
              <SkillUp>Nation SkillUp<ExploreButton>Explore</ExploreButton></SkillUp>
            </Sidebar>

            <Compare>
              <HeadCell>Promise</HeadCell>
              <HeadCell>Async/Await</HeadCell>
              {rows.map(([l, r], i) => (
                <React.Fragment key={i}>
                  <Lines items={l} />
                  <Lines items={r} />
                </React.Fragment>
              ))}
            </Compare>

            <AdColumn>
              <SummerAd>
                <svg width="0" height="0">
                  <filter id="motion" x="-5%" y="-20%" width="110%" height="140%">
                    <feGaussianBlur stdDeviation="0 4" />
                  </filter>
                </svg>
                <AdKicker>This Summer,</AdKicker>
                <Shout $squeeze={0.69}>STOP</Shout>
                <Shout $squeeze={0.703} $moving>SCROLLING</Shout>
                <PitchBlock>
                  <Pitch>Boost your career with</Pitch>
                  <Pitch $strong>GeeksforGeeks Offline Classes</Pitch>
                </PitchBlock>
                <Counsel>Get free counselling</Counsel>
                <AdLogo><GfgMark width={38} color="#0a8a5b" stroke={3.400} /></AdLogo>
                <AdChoices $inset={-3} $top={-3}>
                  <span><InfoIcon /></span>
                  <span><Dots color="#00aecd" /></span>
                </AdChoices>
              </SummerAd>
              <AdobeAd>
                <Shield>
                  <svg width="17" height="19" viewBox="0 0 17 19">
                    <path d="M8.500 0L17 2.500V9c0 5-4 8.500-8.500 10C4 17.500 0 14 0 9V2.500z" fill="#15457e" />
                    <circle cx="8.500" cy="5.500" r="2.600" fill="#fff" />
                    <circle cx="8.500" cy="12" r="4.800" fill="#fff" />
                    <path d="M5.500 12l2.200 2.200 4-4" fill="none" stroke="#15457e" strokeWidth="1.300" />
                  </svg>
                </Shield>
                <AdChoices $inset={1} $top={14} $ruled>
                  <span><InfoIcon /></span>
                  <span><Dots color="#00aecd" /></span>
                </AdChoices>
                <AdobeLogo>Adobe</AdobeLogo>
                <AdobeHead>Adobe<br />Summer<br />Sale.</AdobeHead>
                <AdobeCopy>Save on select<br />Creative Cloud<br />plans.<br />Ends 17 July.</AdobeCopy>
              </AdobeAd>
            </AdColumn>
          </Content>

          <CookieBar>
            <CookieText>
              We use cookies to ensure you have the best browsing experience on our website. By using our site, you acknowledge that you have read and understood our <a>Cookie Policy</a> &amp; <a>Privacy Policy</a>
            </CookieText>
            <GotIt>Got It !</GotIt>
          </CookieBar>
        </PageMain>
        <PageScroll>
          <ScrollArrow $size={6.500} $color="#8b8b8b" />
          <PageThumb />
          <ScrollArrow $size={6.500} $color="#8b8b8b" $down />
        </PageScroll>
      </Page>

      <Taskbar>
        <Weather>
          <svg width="35" height="35" viewBox="0 0 35 35">
            <defs>
              <linearGradient id="cl" x1="0" y1="0" x2="0" y2="1">
                <stop offset="0" stopColor="#9fc3f5" />
                <stop offset=".6" stopColor="#c5d9f8" />
                <stop offset="1" stopColor="#6b9ae8" />
              </linearGradient>
            </defs>
            <path d="M13 6c-.5 8-5 13-12 13.500C3 24 10 26 15 22s6-11-2-16z" fill="#f5a623" />
            <path d="M7 34c-8-.5-8-11.500 0-12 2-8 12-8 14 0 1-2 9.500-1.500 10 4.500 0 4-3 7.500-6.500 7.500z" fill="url(#cl)" />
            <circle cx="25" cy="10" r="10" fill="#c42b1c" />
            <text x="25" y="15" fontSize="13.500" fill="#fff" textAnchor="middle" fontFamily="Open Sans">3</text>
          </svg>
          <WeatherText><div>24°C</div><div>Mostly cloudy</div></WeatherText>
        </Weather>
        <StartMenu>
          <svg width="29" height="29" viewBox="0 0 29 29">
            <defs>
              <linearGradient id="wi" gradientUnits="userSpaceOnUse" x1="0" y1="0" x2="29" y2="29">
                <stop offset="0" stopColor="#4cc8fb" />
                <stop offset=".55" stopColor="#1291e0" />
                <stop offset="1" stopColor="#0472cd" />
              </linearGradient>
            </defs>
            <path d="M1 0h13v14H0V1zM15 0h13l1 1v13H15zM0 15h14v14H1l-1-1zM15 15h14v13l-1 1H15z" fill="url(#wi)" />
          </svg>
        </StartMenu>
        <TaskSearch>
          <svg width="19" height="19" viewBox="0 0 19 19" fill="none" stroke="#262426" strokeWidth="2.200">
            <circle cx="8" cy="8" r="6.900" /><path d="M13 13l5.200 5.200" />
          </svg>
          <span>Search</span>
          <svg width="52" height="28" viewBox="0 0 52 28">
            <defs>
              <linearGradient id="st" x1="0" y1="0" x2="0" y2="1">
                <stop offset="0" stopColor="#cfc8b8" />
                <stop offset="1" stopColor="#857c6c" />
              </linearGradient>
            </defs>
            <path d="M20 26h32l-12-3z" fill="#d9cdd3" />
            <ellipse cx="8.500" cy="22" rx="3.500" ry="4.500" fill="#c98d4e" />
            <ellipse cx="5.500" cy="23.500" rx="5.500" ry="3.200" fill="#3f4145" />
            <ellipse cx="27" cy="20.500" rx="14" ry="6.800" fill="url(#st)" />
            <ellipse cx="28" cy="11" rx="11" ry="4.200" fill="#a3a32c" />
            <ellipse cx="30" cy="4.500" rx="6" ry="4" fill="#cd8b4b" />
          </svg>
        </TaskSearch>
        <Apps>
          {apps.map(([icon, mark]) => (
            <AppSlot key={icon}>
              <AppTile $active={mark === "active"}>{AppIcons[icon]}</AppTile>
              <AppMark $mark={mark} />
            </AppSlot>
          ))}
        </Apps>
        <Tray>
          <TrayItem $width={40}>
            <svg width="14" height="9" viewBox="0 0 14 9" fill="none" stroke="#1b1a1b" strokeWidth="1.600"><path d="M1 7.500L7 1.500l6 6" /></svg>
          </TrayItem>
          <TrayItem $width={40}>
            <svg width="22" height="22" viewBox="0 0 22 22" fill="none" stroke="#1b1a1b" strokeWidth="1.400">
              <path d="M1.500 11A9 9 0 0 1 19 7M20 2v5.500h-6M9.500 21.300C6.500 20.800 4.500 19 3 17M2.300 21.300V16h5.500" />
              <circle cx="15.800" cy="16.500" r="5.200" fill="#ff9500" stroke="none" />
            </svg>
          </TrayItem>
          <TrayItem $width={40}>
            <svg width="21" height="15" viewBox="0 0 21 15">
              <path d="M4.500 14c-5 0-5-7.500 0-8 1.500-6.500 10-6.500 11.500-.5 5.500.5 5 8.500 0 8.500z" fill="#8f8a8b" stroke="#222" strokeWidth="1.200" />
              <path d="M3 13.500c0-3 3-4 4.500-3.500l5-2.500 6.500 2.500c.5 2-1 3.500-3 3.500z" fill="#e6e2e2" />
            </svg>
          </TrayItem>
          <TrayItem $width={56} $lift={2}><div>ENG</div><div>IN</div></TrayItem>
          <TrayItem $width={38}>
            <svg width="21" height="16" viewBox="0 0 21 16" fill="none" stroke="#1b1a1b" strokeWidth="1.300">
              <path d="M1 6.500C6-.5 15-.5 20 6.500M4 9c3.500-5 9.500-5 13 0M7 11.500c2-3 5-3 7 0" />
              <circle cx="10.500" cy="13.500" r="1.800" fill="#1b1a1b" stroke="none" />
            </svg>
          </TrayItem>
          <TrayItem $width={22}>
            <svg width="21" height="17" viewBox="0 0 21 17" fill="none" stroke="#1b1a1b" strokeWidth="1.300">
              <path d="M1 6v5h3.500L9 15V2L4.500 6zM11.500 6c1.300 1.500 1.300 3.500 0 5M14 3.500c3 3 3 7 0 10M16.500 1.200c4.300 4.300 4.300 10.300 0 14.600" />
            </svg>
          </TrayItem>
          <TrayItem $width={38}>
            <svg width="21" height="13" viewBox="0 0 21 13" fill="none" stroke="#1b1a1b" strokeWidth="1.400">
              <rect x=".8" y=".8" width="16.500" height="11.400" rx="2.800" />
              <path d="M3 3h8.500v7H3z" fill="#1b1a1b" stroke="none" />
              <path d="M19 4.500v4" strokeWidth="2.500" />
            </svg>
          </TrayItem>
          <Clock><div>00:16</div><div>14-07-2025</div></Clock>
        </Tray>
      </Taskbar>
    </Screen>
  );
}
